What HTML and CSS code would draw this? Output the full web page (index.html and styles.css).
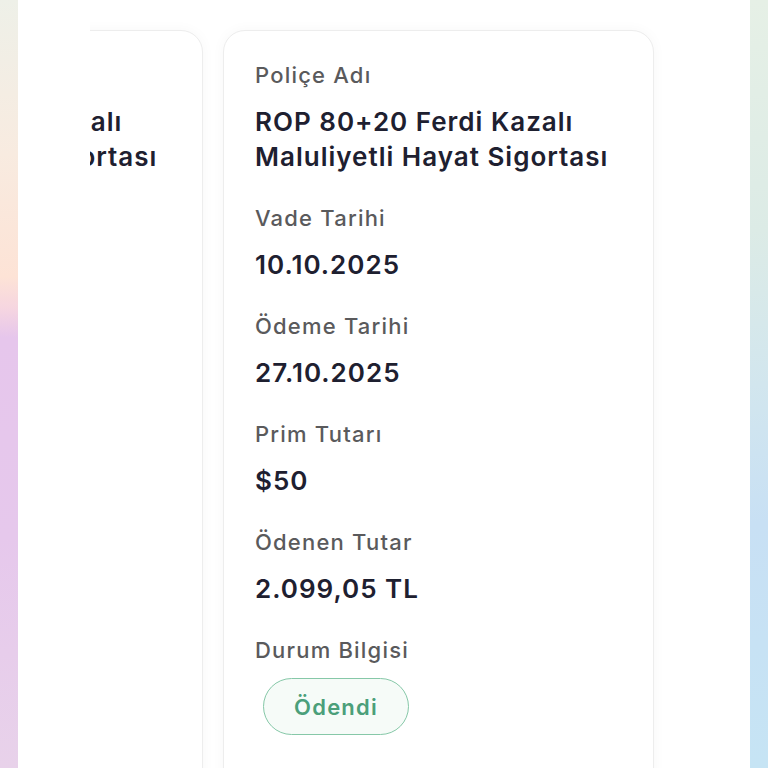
FILE: index.html
```
<!DOCTYPE html>
<html lang="tr">
<head>
<meta charset="utf-8">
<link rel="stylesheet" href="styles.css">
</head>
<body>
<div class="screen">
  <div class="edge edge-left"></div>
  <div class="panel">
    <div class="viewport">
      <div class="track">
        <div class="card">
          <div class="item"><div class="label">Poliçe Adı</div><div class="value">ROP 80+20 Ferdi Kazalı<br>Maluliyetli Hayat Sigortası</div></div>
          <div class="item"><div class="label">Vade Tarihi</div><div class="value">10.10.2025</div></div>
          <div class="item"><div class="label">Ödeme Tarihi</div><div class="value">27.10.2025</div></div>
          <div class="item"><div class="label">Prim Tutarı</div><div class="value">$50</div></div>
          <div class="item"><div class="label">Ödenen Tutar</div><div class="value">2.099,05 TL</div></div>
          <div class="item"><div class="label">Durum Bilgisi</div><div class="badge">Ödendi</div></div>
        </div>
        <div class="card">
          <div class="item"><div class="label">Poliçe Adı</div><div class="value">ROP 80+20 Ferdi Kazalı<br>Maluliyetli Hayat Sigortası</div></div>
          <div class="item"><div class="label">Vade Tarihi</div><div class="value">10.10.2025</div></div>
          <div class="item"><div class="label">Ödeme Tarihi</div><div class="value">27.10.2025</div></div>
          <div class="item"><div class="label">Prim Tutarı</div><div class="value">$50</div></div>
          <div class="item"><div class="label">Ödenen Tutar</div><div class="value">2.099,05 TL</div></div>
          <div class="item"><div class="label">Durum Bilgisi</div><div class="badge">Ödendi</div></div>
        </div>
      </div>
    </div>
  </div>
  <div class="edge edge-right"></div>
</div>
</body>
</html>
```
FILE: styles.css
```
* { box-sizing: border-box; }
html, body { margin: 0; padding: 0; }
body {
  width: 768px;
  height: 768px;
  overflow: hidden;
  font-family: Inter, "Noto Sans", sans-serif;
  background: #ffffff;
}
.screen {
  display: flex;
  width: 768px;
  height: 768px;
}
.edge { width: 18px; flex: none; height: 100%; }
.edge-left {
  background: linear-gradient(to bottom, #eef0e8 0%, #f8ebe0 20%, #fde3d6 36%, #f6d6e0 40%, #e6c6ec 44%, #e6c8ec 70%, #e8d2ea 100%);
}
.edge-right {
  background: linear-gradient(to bottom, #e6f0e6 0%, #dcebe6 30%, #d2e6ee 50%, #c8e0f4 68%, #c6e4f4 100%);
}
.panel {
  flex: 1;
  background: #ffffff;
  overflow: hidden;
  padding-left: 72px;
  height: 100%;
}
.viewport {
  overflow: hidden;
  height: 100%;
  padding-top: 30px;
}
.track {
  display: flex;
  gap: 20px;
  margin-left: -318px;
}
.card {
  flex: none;
  width: 431px;
  height: 800px;
  background: #ffffff;
  border: 1px solid #ededed;
  border-radius: 22px;
  box-shadow: 0 0 14px rgba(0, 0, 0, 0.035);
  padding: 32px 31px 0;
  display: flex;
  flex-direction: column;
  gap: 32px;
}
.item { display: flex; flex-direction: column; gap: 17px; }
.label {
  font-size: 22px;
  line-height: 24px;
  font-weight: 500;
  letter-spacing: 1.2px;
  color: #5a5a5c;
  white-space: nowrap;
}
.value {
  font-size: 26px;
  line-height: 35px;
  font-weight: 600;
  letter-spacing: 1px;
  color: #1e2030;
  white-space: nowrap;
}
.badge {
  align-self: flex-start;
  margin-left: 8px;
  margin-top: -1px;
  width: 146px;
  height: 57px;
  border: 1.5px solid #86c8a8;
  border-radius: 29px;
  background: #f6fbf8;
  color: #4b9f7a;
  font-size: 22px;
  letter-spacing: 1.2px;
  font-weight: 600;
  display: flex;
  align-items: center;
  justify-content: center;
}
```
